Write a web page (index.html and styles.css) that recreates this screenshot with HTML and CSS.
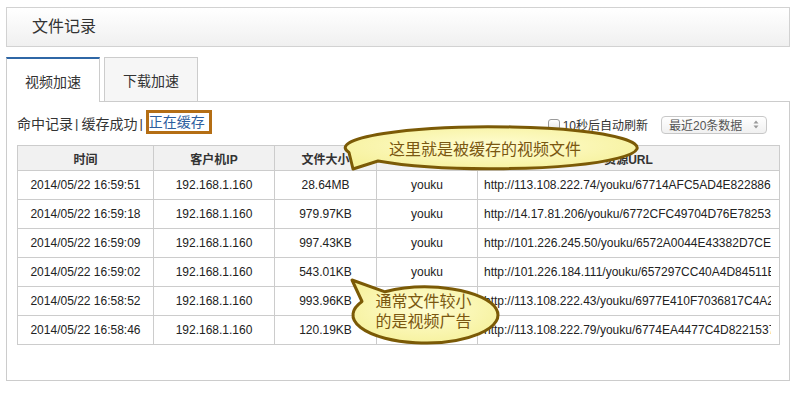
FILE: index.html
```html
<!DOCTYPE html>
<html lang="zh-CN">
<head>
    <meta charset="UTF-8">
    <title>文件记录</title>
    <link rel="stylesheet" href="styles.css">
</head>
<body>
    <div class="page">
        <div class="title-bar">文件记录</div>

        <div class="tabs">
            <div class="tab active">视频加速</div>
            <div class="tab">下载加速</div>
        </div>

        <div class="panel">
            <div class="toolbar">
                <div class="filters">
                    <a>命中记录</a><span class="sep">|</span><a>缓存成功</a><span class="sep">|</span><a class="current">正在缓存</a>
                </div>
                <div class="options">
                    <label class="refresh"><input type="checkbox">10秒后自动刷新</label>
                    <div class="range-select">
                        <span>最近20条数据</span>
                        <svg width="6" height="9" viewBox="0 0 6 9"><path d="M3 0.5 L5.5 3.5 H0.5 Z M3 8.5 L5.5 5.5 H0.5 Z" fill="#999"/></svg>
                    </div>
                </div>
            </div>

            <table class="records">
                <colgroup>
                    <col style="width:136px">
                    <col style="width:121px">
                    <col style="width:102px">
                    <col style="width:101px">
                    <col style="width:302px">
                </colgroup>
                <thead>
                    <tr><th>时间</th><th>客户机IP</th><th>文件大小</th><th>来源</th><th>资源URL</th></tr>
                </thead>
                <tbody>
                    <tr><td>2014/05/22 16:59:51</td><td>192.168.1.160</td><td>28.64MB</td><td>youku</td><td class="url"><div>http://113.108.222.74/youku/67714AFC5AD4E822886B3A2D1/030002010053</div></td></tr>
                    <tr><td>2014/05/22 16:59:18</td><td>192.168.1.160</td><td>979.97KB</td><td>youku</td><td class="url"><div>http://14.17.81.206/youku/6772CFC49704D76E78253A5C2/030002010053</div></td></tr>
                    <tr><td>2014/05/22 16:59:09</td><td>192.168.1.160</td><td>997.43KB</td><td>youku</td><td class="url"><div>http://101.226.245.50/youku/6572A0044E43382D7CE6A3E1/030002010053</div></td></tr>
                    <tr><td>2014/05/22 16:59:02</td><td>192.168.1.160</td><td>543.01KB</td><td>youku</td><td class="url"><div>http://101.226.184.111/youku/657297CC40A4D84511B2A6F3/030002010053</div></td></tr>
                    <tr><td>2014/05/22 16:58:52</td><td>192.168.1.160</td><td>993.96KB</td><td>youku</td><td class="url"><div>http://113.108.222.43/youku/6977E410F7036817C4A2B91D/030002010053</div></td></tr>
                    <tr><td>2014/05/22 16:58:46</td><td>192.168.1.160</td><td>120.19KB</td><td>youku</td><td class="url"><div>http://113.108.222.79/youku/6774EA4477C4D82215375C9A/030002010053</div></td></tr>
                </tbody>
            </table>
        </div>

        <!-- annotation bubbles drawn over the table -->
        <div class="callout callout-cached">
            <svg width="300" height="52" viewBox="340 122 300 52">
                <defs>
                    <radialGradient id="bubbleFill" cx="50%" cy="45%" r="60%">
                        <stop offset="0" stop-color="#fffdd2"/>
                        <stop offset="1" stop-color="#f6f19c"/>
                    </radialGradient>
                </defs>
                <path d="M349 152.5 A146 21 0 1 1 378 161 L353 169 Z" fill="url(#bubbleFill)" stroke="#7b5a06" stroke-width="3" stroke-linejoin="round"/>
            </svg>
            <span>这里就是被缓存的视频文件</span>
        </div>

        <div class="callout callout-small">
            <svg width="160" height="75" viewBox="345 275 160 75">
                <defs>
                    <radialGradient id="bubbleFill2" cx="50%" cy="45%" r="60%">
                        <stop offset="0" stop-color="#fffdd2"/>
                        <stop offset="1" stop-color="#f6f19c"/>
                    </radialGradient>
                </defs>
                <path d="M385 291.8 A72.5 28 0 1 1 362 301.5 L352 280 Z" fill="url(#bubbleFill2)" stroke="#7b5a06" stroke-width="3" stroke-linejoin="round"/>
            </svg>
            <span>通常文件较小<br>的是视频广告</span>
        </div>
    </div>
</body>
</html>
```

FILE: styles.css
```css
body {
    margin: 0;
    font-family: "Liberation Sans", "Noto Sans CJK SC", sans-serif;
    color: #333;
    background: #fff;
}

.page {
    position: relative;
    padding: 7px 8px 0 6px;
}

.title-bar {
    height: 38px;
    line-height: 38px;
    padding-left: 25px;
    border: 1px solid #d2d2d2;
    background: linear-gradient(#fff, #f0f0f0);
    font-size: 16px;
}

.tabs {
    display: flex;
    gap: 4px;
    margin-top: 10px;
    margin-bottom: -1px;
    position: relative;
    z-index: 1;
}

.tab {
    box-sizing: border-box;
    width: 94px;
    height: 45px;
    display: flex;
    align-items: center;
    justify-content: center;
    border: 1px solid #ccc;
    background: #f6f6f6;
    font-size: 14px;
    color: #333;
}

.tab.active {
    background: #fff;
    border-top: 2px solid #2f67a6;
    border-bottom: none;
}

.panel {
    box-sizing: border-box;
    height: 280px;
    border: 1px solid #ccc;
    padding: 8px 10px 0;
}

.toolbar {
    display: flex;
    justify-content: space-between;
    align-items: center;
    height: 26px;
}

.filters {
    display: flex;
    align-items: center;
    align-self: flex-start;
    height: 24px;
    font-size: 14px;
    padding-top: 2px;
    box-sizing: border-box;
}

.filters a {
    color: #333;
    cursor: pointer;
}

.filters .sep {
    margin: 0 3px 0 2px;
    font-size: 13px;
}

.filters a.current {
    color: #2d5e9e;
    border: 3px solid #b46e14;
    padding: 1px 4px 0 0;
    line-height: 17px;
    margin-top: -2px;
}

.options {
    display: flex;
    align-items: center;
    margin-right: 12px;
    margin-top: 3px;
}

.refresh {
    display: flex;
    align-items: center;
    font-size: 12px;
    color: #333;
}

.refresh input {
    appearance: none;
    width: 12px;
    height: 11px;
    margin: 0 3px 0 0;
    border: 1px solid #9a9a9a;
    border-radius: 3px;
    background: linear-gradient(#fff, #e6e6e6);
}

.range-select {
    box-sizing: border-box;
    width: 106px;
    height: 18px;
    margin-left: 13px;
    padding: 0 7px;
    display: flex;
    align-items: center;
    justify-content: space-between;
    border: 1px solid #c8c8c8;
    border-radius: 4px;
    background: linear-gradient(#fff, #f0f0f0);
    font-size: 12px;
    color: #555;
}

.records {
    margin-top: 9px;
    width: 762px;
    table-layout: fixed;
    border-collapse: collapse;
    font-size: 12px;
    color: #222;
}

.records th,
.records td {
    border: 1px solid #ccc;
    text-align: center;
    padding: 0 6px;
    white-space: nowrap;
}

.records th {
    height: 24px;
    background: #f1f1f1;
    font-weight: bold;
    color: #333;
}

.records td {
    height: 28px;
}

.records td.url {
    text-align: left;
    padding: 0 8px 0 6px;
}

.records td.url div {
    overflow: hidden;
}

.callout {
    position: absolute;
    box-sizing: border-box;
    display: flex;
    align-items: center;
    justify-content: center;
    font-family: "Noto Sans CJK SC", sans-serif;
    font-size: 16px;
    color: #7a5710;
}

.callout svg {
    position: absolute;
    left: 0;
    top: 0;
    overflow: visible;
}

.callout span {
    position: relative;
}

.callout-cached {
    left: 340px;
    top: 122px;
    width: 300px;
    height: 52px;
    padding-right: 10px;
    line-height: 20px;
}

.callout-small {
    left: 345px;
    top: 275px;
    width: 160px;
    height: 75px;
    padding: 0 3px 5px 0;
    line-height: 20px;
}
```
